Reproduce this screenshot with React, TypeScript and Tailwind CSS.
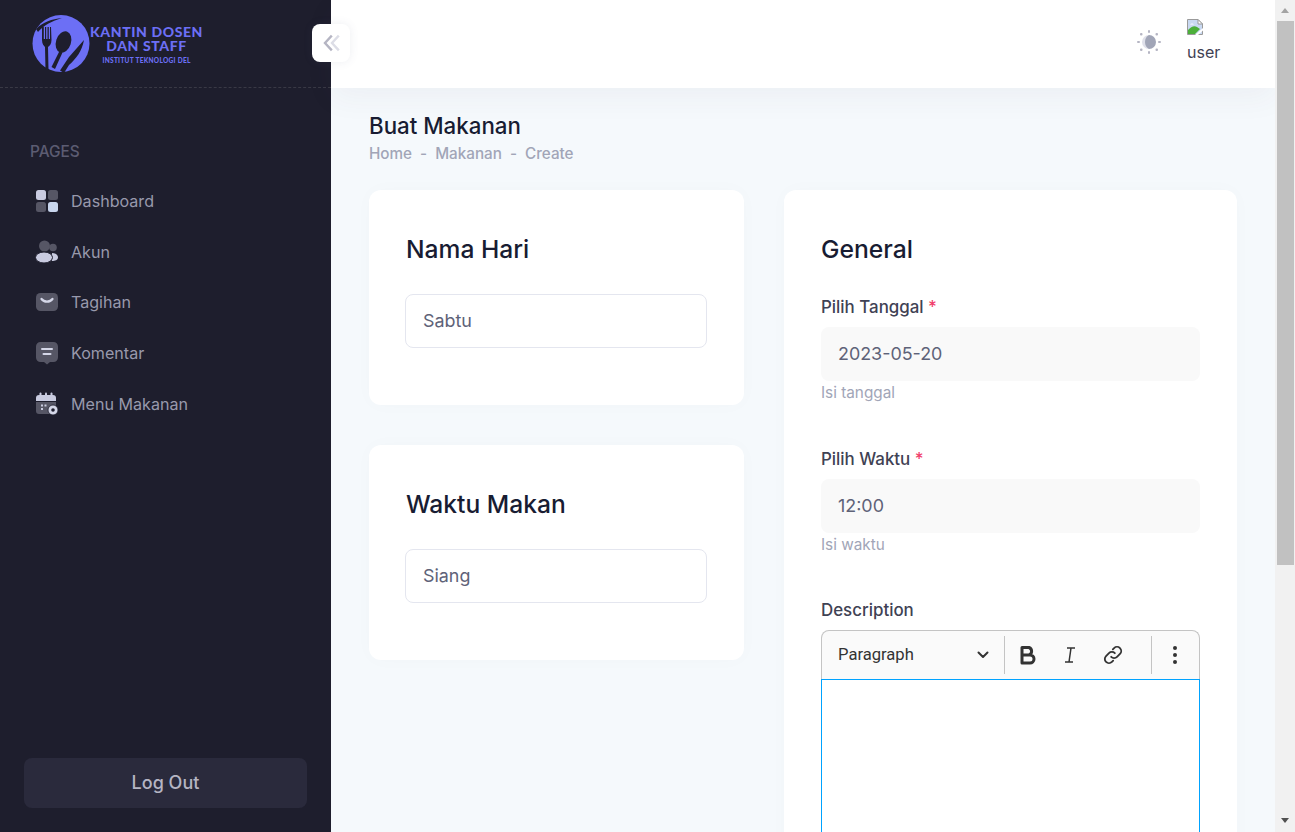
const menu = [
  { label: 'Dashboard', icon: <DashboardIcon /> },
  { label: 'Akun', icon: <AkunIcon /> },
  { label: 'Tagihan', icon: <TagihanIcon /> },
  { label: 'Komentar', icon: <KomentarIcon /> },
  { label: 'Menu Makanan', icon: <KalenderIcon /> },
]

function DashboardIcon() {
  return (
    <svg width="24" height="24" viewBox="0 0 24 24">
      <rect x="1" y="1" width="10" height="10" rx="2.5" fill="#c9cbe0" />
      <rect x="13" y="1" width="10" height="10" rx="2.5" fill="#565665" />
      <rect x="1" y="13" width="10" height="10" rx="2.5" fill="#565665" />
      <rect x="13" y="13" width="10" height="10" rx="2.5" fill="#c9d6ee" />
    </svg>
  )
}

function AkunIcon() {
  return (
    <svg width="24" height="24" viewBox="0 0 24 24">
      <circle cx="9.5" cy="6" r="5.5" fill="#565665" />
      <circle cx="18" cy="7.5" r="3.8" fill="#565665" />
      <path d="M17 13c3.5 0 6 2 6 4.5S20 21 17 21z" fill="#c9cbe0" />
      <ellipse cx="9" cy="17.5" rx="8.5" ry="5.5" fill="#c9cbe0" stroke="#1e1e2d" strokeWidth="1" />
    </svg>
  )
}

function TagihanIcon() {
  return (
    <svg width="24" height="24" viewBox="0 0 24 24">
      <rect x="1" y="3" width="22" height="18" rx="4.5" fill="#565665" />
      <path d="M6.5 9c2.5 3.5 8.5 3.5 11 0" fill="none" stroke="#d5d7e8" strokeWidth="2.2" strokeLinecap="round" />
    </svg>
  )
}

function KomentarIcon() {
  return (
    <svg width="24" height="24" viewBox="0 0 24 24">
      <path d="M5.5 1h13A4.5 4.5 0 0 1 23 5.5V16.5a4.5 4.5 0 0 1-4.5 4.5h-3.5L12 23.5 9 21H5.5A4.5 4.5 0 0 1 1 16.5V5.5A4.5 4.5 0 0 1 5.5 1z" fill="#565665" />
      <rect x="6" y="7" width="12" height="2" rx="1" fill="#d5d7e8" />
      <rect x="7.5" y="12" width="9" height="2" rx="1" fill="#d5d7e8" />
    </svg>
  )
}

function KalenderIcon() {
  return (
    <svg width="24" height="24" viewBox="0 0 24 24">
      <path d="M1 10h20v9a3 3 0 0 1-3 3H4a3 3 0 0 1-3-3z" fill="#565665" />
      <path d="M4 3h14a3 3 0 0 1 3 3v3H1V6a3 3 0 0 1 3-3z" fill="#c9cbe0" />
      <rect x="4.5" y="0.5" width="2" height="4" rx="1" fill="#c9cbe0" />
      <rect x="10" y="0.5" width="2" height="4" rx="1" fill="#c9cbe0" />
      <rect x="15.5" y="0.5" width="2" height="4" rx="1" fill="#c9cbe0" />
      <rect x="6" y="12.5" width="2" height="2" fill="#c9cbe0" />
      <rect x="9.5" y="12.5" width="2" height="2" fill="#c9cbe0" />
      <rect x="6" y="16" width="2" height="2" fill="#c9cbe0" />
      <circle cx="18" cy="18" r="5" fill="#d5d7e8" stroke="#1e1e2d" strokeWidth="0.8" />
      <circle cx="18" cy="18" r="1.8" fill="#1e1e2d" />
    </svg>
  )
}

function LogoMark() {
  return (
    <svg width="60" height="60" viewBox="0 0 60 60">
      <circle cx="30" cy="30.5" r="28.5" fill="#6c6ff5" />
      <path d="M-2 14C6 6 18 1 34 0L36 -3H-2z" fill="#1e1e2d" />
      <path d="M5 16C12 9 21 6 31 5C21 8 13 12 7 19z" fill="#1e1e2d" />
      <path d="M11 14V27C11 31 13 33 14 34L14.5 57H17.5L17 34C18.5 33 20.5 31 20.5 27L20 14H19V26H17.8V14H16.5V26H15.2V14H14V26H12.8V14z" fill="#1e1e2d" />
      <ellipse cx="32.5" cy="29" rx="7.5" ry="11" transform="rotate(18 32.5 29)" fill="#1e1e2d" />
      <path d="M28.5 38l3 1.5L24 56l-3.5-2z" fill="#1e1e2d" />
      <path d="M53 27C51 38 45 46 38 52L33 60L29 57.5L38 44z" fill="#1e1e2d" />
    </svg>
  )
}

function BrokenImage() {
  return (
    <svg width="16" height="16" viewBox="0 0 16 16" className="block">
      <path d="M0.5 0.5h10.5l4.5 4.5v10.5h-15z" fill="#c9d9f2" stroke="#9a9a9a" />
      <path d="M11 0.5v4.5h4.5z" fill="#fff" stroke="#9a9a9a" />
      <path d="M1 15V11C4 8 7 6 10 8L13 10L8 15z" fill="#4caf3a" />
      <path d="M3 5.5c1-1.2 3-1.2 4 0z" fill="#fff" />
      <path d="M8 16l8-7v2.5L11 16z" fill="#fff" />
    </svg>
  )
}

function Field({ label, value, hint }: { label: string; value: string; hint: string }) {
  return (
    <div>
      <div className="text-[16.9px] leading-[20px] font-medium text-[#3f4254]">
        {label} <span className="text-[#f1416c]">*</span>
      </div>
      <div className="mt-[10px] h-[54px] rounded-lg bg-[#f9f9f9] px-[17px] flex items-center text-[17.9px] font-normal text-[#5e6278]">
        {value}
      </div>
      <div className="mt-[2px] text-[15.3px] leading-[20px] text-[#a1a5b7]">{hint}</div>
    </div>
  )
}

function SmallCard({ title, value }: { title: string; value: string }) {
  return (
    <div className="h-[215px] rounded-xl bg-white px-[36px] pt-[43px] shadow-[0_0_20px_rgba(76,87,125,0.02)]">
      <h3 className="pl-[1px] text-[24.6px] leading-[32px] font-medium text-[#181c32]">{title}</h3>
      <div className="mt-[29px] h-[54px] w-[302px] rounded-lg border border-[#e4e6ef] px-[17px] flex items-center text-[17.9px] font-normal text-[#5e6278]">
        {value}
      </div>
    </div>
  )
}

export default function App() {
  return (
    <div className="relative flex h-screen overflow-hidden bg-[#f5f9fc] font-['Inter',sans-serif]">
      {/* sidebar */}
      <aside className="flex w-[331px] shrink-0 flex-col bg-[#1e1e2d]">
        <div className="flex h-[88px] items-center border-b border-dashed border-[#393945] pl-[31px] pb-[2px]">
          <LogoMark />
          <div className="-ml-[1px] mt-[5px] flex flex-col items-center font-['Lato',sans-serif] font-black text-[#6c6ff5]">
            <div className="text-center text-[14px] leading-[14px] tracking-[0.6px]">
              KANTIN DOSEN<br />DAN STAFF
            </div>
            <div className="mt-[4px] text-[6.5px] leading-[8px] tracking-[0.3px]">INSTITUT TEKNOLOGI DEL</div>
          </div>
        </div>
        <div className="pl-[30px] pt-[55px] text-[15.4px] leading-[18px] font-medium text-[#5c5c72]">PAGES</div>
        <nav className="mt-[19.9px] flex flex-col gap-[10.75px] pl-[35px]">
          {menu.map(m => (
            <div key={m.label} className="flex h-[40px] items-center gap-[12px] text-[16.1px] font-normal text-[#9899ac]">
              {m.icon}
              {m.label}
            </div>
          ))}
        </nav>
        <div className="mt-auto px-[24px] pb-[24px]">
          <div className="flex h-[50px] items-center justify-center rounded-lg bg-[#2a2a3c] pb-[2px] text-[18px] font-medium text-[#b5b5c3]">
            Log Out
          </div>
        </div>
      </aside>

      {/* collapse toggle */}
      <button className="absolute left-[312px] top-[24px] flex h-[38px] w-[38px] items-center justify-center rounded-lg bg-white shadow-[0_0_10px_rgba(76,87,125,0.1)]">
        <svg width="18" height="18" viewBox="0 0 18 18" fill="none" strokeWidth="2.4" strokeLinecap="square">
          <path d="M9 2.5L3 9l6 6.5" stroke="#b5b5c3" />
          <path d="M16 2.5L10 9l6 6.5" stroke="#dcdde6" />
        </svg>
      </button>

      {/* main */}
      <div className="flex min-w-0 flex-1 flex-col">
        <header className="flex h-[88px] shrink-0 items-center justify-end bg-white pb-[4px] pr-[55px] shadow-[0_10px_30px_rgba(82,63,105,0.05)]">
          <svg width="26" height="26" viewBox="0 0 26 26" className="mr-[25px]">
            <path d="M13 6a7 7 0 0 0 0 14z" fill="#dfe0ea" />
            <path d="M13 6a7 7 0 0 1 0 14c-2.5-1.2-4-4-4-7s1.5-5.8 4-7z" fill="#a1a5b7" />
            <g fill="#b5b5c3">
              <rect x="12" y="1" width="2" height="3" rx="1" />
              <rect x="12" y="22" width="2" height="3" rx="1" />
              <rect x="1" y="12" width="3" height="2" rx="1" />
              <rect x="22" y="12" width="3" height="2" rx="1" />
              <rect x="4" y="4" width="2.5" height="2.5" rx="1" />
              <rect x="19.5" y="4" width="2.5" height="2.5" rx="1" />
              <rect x="4" y="19.5" width="2.5" height="2.5" rx="1" />
              <rect x="19.5" y="19.5" width="2.5" height="2.5" rx="1" />
            </g>
          </svg>
          <div className="mb-[4px] w-[33px] text-[16px] leading-[18px] text-[#3f4254]">
            <BrokenImage />
            <div className="mt-[8px]">user</div>
          </div>
        </header>

        <main className="flex-1 overflow-hidden px-[38px] pt-[24px]">
          <h1 className="text-[22.3px] leading-[28px] font-medium text-[#181c32]">Buat Makanan</h1>
          <div className="mt-[4px] flex gap-[8px] text-[15.25px] leading-[20px] font-medium text-[#a1a5b7]">
            <span>Home</span><span>-</span><span>Makanan</span><span>-</span><span>Create</span>
          </div>
          <div className="mt-[26px] flex gap-[40px]">
            <div className="flex w-[375px] shrink-0 flex-col gap-[40px]">
              <SmallCard title="Nama Hari" value="Sabtu" />
              <SmallCard title="Waktu Makan" value="Siang" />
            </div>
            <div className="flex h-[760px] flex-1 flex-col rounded-xl bg-white px-[37px] pt-[43px] shadow-[0_0_20px_rgba(76,87,125,0.02)]">
              <h3 className="text-[24.7px] leading-[32px] font-medium text-[#181c32]">General</h3>
              <div className="mt-[32px] w-[379px]">
                <Field label="Pilih Tanggal" value="2023-05-20" hint="Isi tanggal" />
                <div className="mt-[46px]">
                  <Field label="Pilih Waktu" value="12:00" hint="Isi waktu" />
                </div>
                <div className="mt-[45px] text-[16.9px] leading-[20px] font-medium text-[#3f4254]">Description</div>
                <div className="mt-[10px] flex h-[49px] items-center rounded-t-lg border border-b-0 border-[#c4c4c4] bg-[#fafafa] font-['Roboto',sans-serif]">
                  <span className="w-[155px] pl-[16px] text-[16.6px] leading-none text-[#333]">Paragraph</span>
                  <svg width="12" height="8" viewBox="0 0 12 8" fill="none" stroke="#333" strokeWidth="2" strokeLinecap="round" strokeLinejoin="round">
                    <path d="M1.5 1.5L6 6l4.5-4.5" />
                  </svg>
                  <div className="ml-[15px] h-[38px] w-px bg-[#c4c4c4]" />
                  <svg width="24" height="24" viewBox="0 0 24 24" fill="none" stroke="#333" strokeWidth="3" className="ml-[11px]">
                    <path d="M6 4.5h7a4 4 0 0 1 0 7.5H6zM6 12h8a4 4 0 0 1 0 8H6z" strokeLinejoin="round" />
                  </svg>
                  <svg width="20" height="20" viewBox="0 0 20 20" fill="none" stroke="#333" strokeWidth="1.5" className="ml-[20px]">
                    <path d="M7 3h8M5 17h8M11 3L9 17" />
                  </svg>
                  <svg width="22" height="22" viewBox="0 0 24 24" fill="none" stroke="#333" strokeWidth="2" strokeLinecap="round" className="ml-[22px]">
                    <path d="M10 14a4.5 4.5 0 0 0 6.4 0l3.2-3.2a4.5 4.5 0 0 0-6.4-6.4L11.8 5.8" />
                    <path d="M14 10a4.5 4.5 0 0 0-6.4 0l-3.2 3.2a4.5 4.5 0 0 0 6.4 6.4l1.4-1.4" />
                  </svg>
                  <div className="ml-[27px] h-[38px] w-px bg-[#c4c4c4]" />
                  <svg width="6" height="20" viewBox="0 0 6 20" fill="#333" className="ml-[20px]">
                    <circle cx="3" cy="3" r="2" />
                    <circle cx="3" cy="10" r="2" />
                    <circle cx="3" cy="17" r="2" />
                  </svg>
                </div>
                <div className="h-[300px] border border-[#00a3ff] bg-white" />
              </div>
            </div>
          </div>
        </main>
      </div>

      {/* page scrollbar */}
      <div className="flex w-[20px] shrink-0 flex-col items-center bg-[#f1f1f1]">
        <div className="flex h-[21px] w-full items-center justify-center">
          <div className="h-0 w-0 border-x-[4px] border-b-[5px] border-x-transparent border-b-[#a3a3a3]" />
        </div>
        <div className="h-[544px] w-[17px] bg-[#c1c1c1]" />
        <div className="mt-auto flex h-[24px] w-full items-center justify-center">
          <div className="h-0 w-0 border-x-[4px] border-t-[5px] border-x-transparent border-t-[#505050]" />
        </div>
      </div>
    </div>
  )
}
